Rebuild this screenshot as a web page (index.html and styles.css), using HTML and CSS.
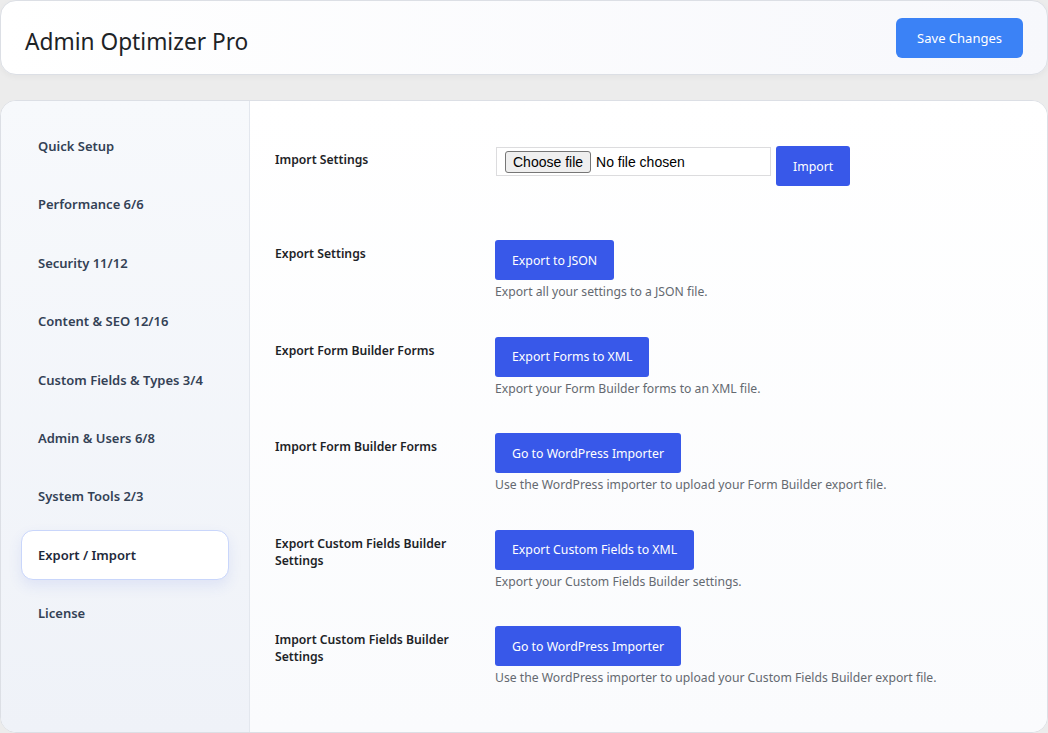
FILE: index.html
```html
<!DOCTYPE html>
<html lang="en">
  <head>
    <meta charset="UTF-8" />
    <meta name="viewport" content="width=device-width, initial-scale=1.0" />
    <title>Admin Optimizer Pro</title>
    <link rel="stylesheet" href="styles.css">
  </head>
  <body>
    <header class="topbar">
      <h1 class="app-title">Admin Optimizer Pro</h1>
      <button class="btn-save">Save Changes</button>
    </header>

    <div class="settings-card">
      <nav class="sidebar">
        <a href="#" class="nav-item">Quick Setup</a>
        <a href="#" class="nav-item">Performance 6/6</a>
        <a href="#" class="nav-item">Security 11/12</a>
        <a href="#" class="nav-item">Content &amp; SEO 12/16</a>
        <a href="#" class="nav-item">Custom Fields &amp; Types 3/4</a>
        <a href="#" class="nav-item">Admin &amp; Users 6/8</a>
        <a href="#" class="nav-item">System Tools 2/3</a>
        <a href="#" class="nav-item active">Export / Import</a>
        <a href="#" class="nav-item">License</a>
      </nav>

      <main class="panel">
        <div class="form-row first">
          <div class="form-label">Import Settings</div>
          <div class="form-field">
            <div class="file-line">
              <label class="file-input">
                <input type="file" class="file-hidden" />
                <span class="file-button">Choose file</span>
                <span class="file-name">No file chosen</span>
              </label>
              <button class="btn">Import</button>
            </div>
          </div>
        </div>

        <div class="form-row">
          <div class="form-label">Export Settings</div>
          <div class="form-field">
            <button class="btn">Export to JSON</button>
            <p class="field-desc">Export all your settings to a JSON file.</p>
          </div>
        </div>

        <div class="form-row">
          <div class="form-label">Export Form Builder Forms</div>
          <div class="form-field">
            <button class="btn">Export Forms to XML</button>
            <p class="field-desc">Export your Form Builder forms to an XML file.</p>
          </div>
        </div>

        <div class="form-row">
          <div class="form-label">Import Form Builder Forms</div>
          <div class="form-field">
            <button class="btn">Go to WordPress Importer</button>
            <p class="field-desc">Use the WordPress importer to upload your Form Builder export file.</p>
          </div>
        </div>

        <div class="form-row">
          <div class="form-label">Export Custom Fields Builder Settings</div>
          <div class="form-field">
            <button class="btn">Export Custom Fields to XML</button>
            <p class="field-desc">Export your Custom Fields Builder settings.</p>
          </div>
        </div>

        <div class="form-row">
          <div class="form-label">Import Custom Fields Builder Settings</div>
          <div class="form-field">
            <button class="btn">Go to WordPress Importer</button>
            <p class="field-desc">Use the WordPress importer to upload your Custom Fields Builder export file.</p>
          </div>
        </div>
      </main>
    </div>
  </body>
</html>
```

FILE: styles.css
```css
:root {
  --blue: #3858e9;
  --save: #3b82f6;
  --text: #1d2327;
  --nav-text: #334155;
  --muted: #646970;
  --border: #dcdfe5;
}

html,
body {
  margin: 0;
  padding: 0;
  background-color: #ececec;
  font-family: "Noto Sans", sans-serif;
  color: var(--text);
}

.topbar {
  display: flex;
  align-items: center;
  justify-content: space-between;
  height: 73px;
  padding: 0 24px 0 24px;
  background: linear-gradient(90deg, #ffffff, #f7f8fc);
  border: 1px solid var(--border);
  border-radius: 16px;
  box-shadow: 0 2px 6px rgba(0, 0, 0, 0.04);
}

.app-title {
  margin: 8px 0 0;
  font-size: 22.7px;
  font-weight: 400;
  color: var(--text);
}

.btn-save {
  height: 40px;
  padding: 0 21px;
  border: none;
  border-radius: 6px;
  background-color: var(--save);
  color: white;
  font-family: inherit;
  font-size: 13px;
  cursor: pointer;
}

.settings-card {
  display: flex;
  margin-top: 25px;
  height: 631px;
  border: 1px solid var(--border);
  border-radius: 16px;
  overflow: hidden;
  background: white;
}

.sidebar {
  display: flex;
  flex-direction: column;
  gap: 8.4px;
  width: 249px;
  flex-shrink: 0;
  padding: 20px 20px 0 20px;
  box-sizing: border-box;
  background: linear-gradient(180deg, #f7f9fc, #eff2f8);
  border-right: 1px solid #e3e7ee;
}

.nav-item {
  display: block;
  padding: 14px 16px;
  line-height: 20px;
  border: 1px solid transparent;
  border-radius: 12px;
  font-size: 13px;
  font-weight: 600;
  color: var(--nav-text);
  text-decoration: none;
  white-space: nowrap;
}

.nav-item.active {
  background-color: white;
  border-color: #c9d6fb;
  color: #1e293b;
  box-shadow: 0 6px 14px rgba(59, 91, 219, 0.1);
}

.panel {
  flex: 1;
  padding: 27.25px 25px;
  background: linear-gradient(180deg, #ffffff, #fafbfd);
}

.form-row {
  display: flex;
  padding: 17.75px 0;
}

.form-label {
  width: 220px;
  flex-shrink: 0;
  padding-top: 5px;
  padding-right: 20px;
  box-sizing: border-box;
  font-size: 12.2px;
  line-height: 17px;
  font-weight: 600;
  color: var(--text);
}

.form-row.first .form-field {
  height: 58.5px;
}

.file-line {
  display: flex;
  align-items: flex-start;
  gap: 5px;
}

.file-input {
  display: flex;
  align-items: center;
  gap: 5px;
  width: 275px;
  height: 29px;
  margin: 1px 0 0 1px;
  padding: 0 8px;
  box-sizing: border-box;
  border: 1px solid #dcdcde;
  background-color: white;
  font-family: "Liberation Sans", Arial, sans-serif;
  font-size: 14px;
  color: black;
  cursor: pointer;
}

.file-hidden {
  display: none;
}

.file-button {
  height: 22px;
  line-height: 20px;
  padding: 0 7px;
  box-sizing: border-box;
  border: 1px solid #767676;
  border-radius: 3px;
  background-color: #efefef;
}

.btn {
  height: 40px;
  padding: 0 17px;
  border: none;
  border-radius: 3px;
  background-color: var(--blue);
  color: white;
  font-family: inherit;
  font-size: 12.3px;
  cursor: pointer;
}

.field-desc {
  margin: 3px 0 0;
  font-size: 12.2px;
  line-height: 18px;
  color: var(--muted);
}
```
